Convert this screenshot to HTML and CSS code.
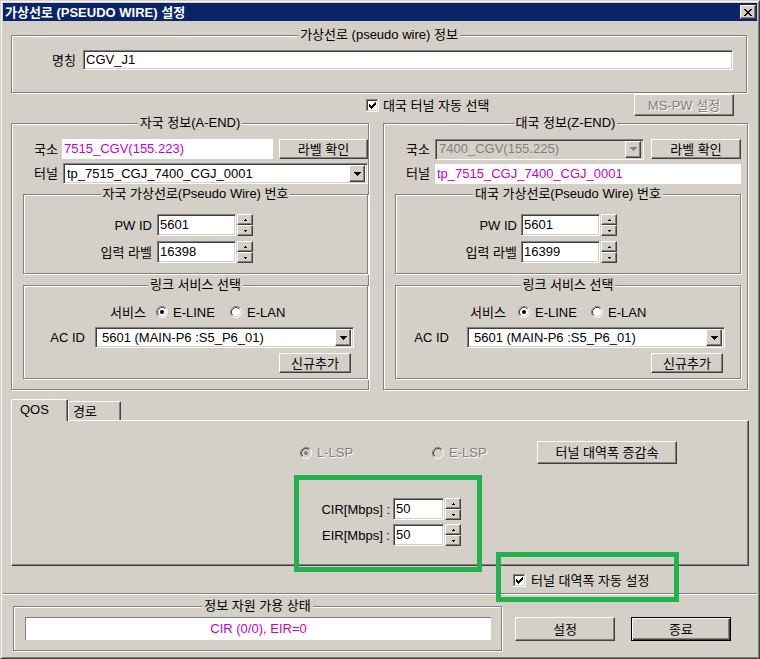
FILE: index.html
```html
<!DOCTYPE html>
<html lang="ko">
<head>
<meta charset="utf-8">
<title>가상선로 (PSEUDO WIRE) 설정</title>
<link rel="stylesheet" href="styles.css">
</head>
<body>
<div class="window">
  <div class="titlebar">
    <span class="title">가상선로 (PSEUDO WIRE) 설정</span>
    <span class="btn close-btn"><svg width="8" height="7" viewBox="0 0 8 7" shape-rendering="crispEdges"><path d="M0 0h2v1H0zM6 0h2v1H6zM1 1h2v1H1zM5 1h2v1H5zM2 2h4v1H2zM3 3h2v1H3zM2 4h4v1H2zM1 5h2v1H1zM5 5h2v1H5zM0 6h2v1H0zM6 6h2v1H6z"/></svg></span>
  </div>

  <div class="client">
    <div class="group g-info">
      <div class="gtitle"><span>가상선로 (pseudo wire) 정보</span></div>
      <div class="row r-name">
        <span class="lbl l-name">명칭</span>
        <div class="edit e-name">CGV_J1</div>
      </div>
    </div>

    <div class="row r-auto">
      <svg class="chk chk-auto" width="13" height="13" viewBox="0 0 13 13" shape-rendering="crispEdges"><rect width="13" height="13" fill="#fff"/><path d="M0 0h12v1H1v11H0z" fill="#808080"/><path d="M1 1h10v1H2v9H1z" fill="#404040"/><path d="M1 11h11v1H1zM11 1h1v11h-1z" fill="#D4D0C8"/><path d="M3 5h1v3H3zM4 6h1v3H4zM5 7h1v3H5zM6 6h1v3H6zM7 5h1v3H7zM8 4h1v3H8zM9 3h1v3H9z" fill="#000"/></svg>
      <span class="chk-text">대국 터널 자동 선택</span>
      <span class="btn btn-mspw dis">MS-PW 설정</span>
    </div>

    <div class="ends">
      <!-- A-END -->
      <div class="group g-end g-a">
        <div class="gtitle"><span>자국 정보(A-END)</span></div>
        <div class="row r-field">
          <span class="lbl la">국소</span>
          <div class="ro ro-a mag">7515_CGV(155.223)</div>
          <span class="btn btn-label-a">라벨 확인</span>
        </div>
        <div class="row r-field r-tunnel">
          <span class="lbl la">터널</span>
          <div class="combo cb-a-tunnel"><span class="combo-text">tp_7515_CGJ_7400_CGJ_0001</span><span class="btn combo-btn"><svg width="7" height="4" viewBox="0 0 7 4" shape-rendering="crispEdges"><path d="M0 0h7v1H0zM1 1h5v1H1zM2 2h3v1H2zM3 3h1v1H3z"/></svg></span></div>
        </div>
        <div class="group sub-pw">
          <div class="gtitle"><span>자국 가상선로(Pseudo Wire) 번호</span></div>
          <div class="row r-spin">
            <span class="lbl lpw-a">PW ID</span>
            <div class="edit e-spin e-spin-a">5601</div>
            <div class="spin">
              <span class="btn spin-btn"><svg width="3" height="2" viewBox="0 0 3 2" shape-rendering="crispEdges"><path d="M1 0h1v1H1zM0 1h3v1H0z"/></svg></span>
              <span class="btn spin-btn"><svg width="3" height="2" viewBox="0 0 3 2" shape-rendering="crispEdges"><path d="M0 0h3v1H0zM1 1h1v1H1z"/></svg></span>
            </div>
          </div>
          <div class="row r-spin r-spin2">
            <span class="lbl lpw-a">입력 라벨</span>
            <div class="edit e-spin e-spin-a">16398</div>
            <div class="spin">
              <span class="btn spin-btn"><svg width="3" height="2" viewBox="0 0 3 2" shape-rendering="crispEdges"><path d="M1 0h1v1H1zM0 1h3v1H0z"/></svg></span>
              <span class="btn spin-btn"><svg width="3" height="2" viewBox="0 0 3 2" shape-rendering="crispEdges"><path d="M0 0h3v1H0zM1 1h1v1H1z"/></svg></span>
            </div>
          </div>
        </div>
        <div class="group sub-link">
          <div class="gtitle"><span>링크 서비스 선택</span></div>
          <div class="row r-radio r-radio-a">
            <span class="svc-lbl">서비스</span>
            <span class="ritem ritem1"><svg class="radio" width="12" height="12" viewBox="0 0 12 12"><circle cx="6" cy="6" r="5" fill="#fff"/><path d="M2.11 9.89A5.5 5.5 0 0 1 9.89 2.11" fill="none" stroke="#808080"/><path d="M9.89 2.11A5.5 5.5 0 0 1 2.11 9.89" fill="none" stroke="#fff"/><path d="M2.82 9.18A4.5 4.5 0 0 1 9.18 2.82" fill="none" stroke="#404040"/><path d="M9.18 2.82A4.5 4.5 0 0 1 2.82 9.18" fill="none" stroke="#D4D0C8"/><circle cx="6" cy="6" r="2" fill="#000"/></svg>E-LINE</span>
            <span class="ritem"><svg class="radio" width="12" height="12" viewBox="0 0 12 12"><circle cx="6" cy="6" r="5" fill="#fff"/><path d="M2.11 9.89A5.5 5.5 0 0 1 9.89 2.11" fill="none" stroke="#808080"/><path d="M9.89 2.11A5.5 5.5 0 0 1 2.11 9.89" fill="none" stroke="#fff"/><path d="M2.82 9.18A4.5 4.5 0 0 1 9.18 2.82" fill="none" stroke="#404040"/><path d="M9.18 2.82A4.5 4.5 0 0 1 2.82 9.18" fill="none" stroke="#D4D0C8"/></svg>E-LAN</span>
          </div>
          <div class="row r-ac">
            <span class="lbl lac-a">AC ID</span>
            <div class="combo cb-ac cb-ac-a"><span class="combo-text">5601 (MAIN-P6 :S5_P6_01)</span><span class="btn combo-btn"><svg width="7" height="4" viewBox="0 0 7 4" shape-rendering="crispEdges"><path d="M0 0h7v1H0zM1 1h5v1H1zM2 2h3v1H2zM3 3h1v1H3z"/></svg></span></div>
          </div>
          <span class="btn btn-new">신규추가</span>
        </div>
      </div>

      <!-- Z-END -->
      <div class="group g-end g-z">
        <div class="gtitle"><span>대국 정보(Z-END)</span></div>
        <div class="row r-field">
          <span class="lbl lz">국소</span>
          <div class="combo combo-dis cb-z-kuk"><span class="combo-text">7400_CGV(155.225)</span><span class="btn combo-btn"><svg width="7" height="4" viewBox="0 0 7 4" shape-rendering="crispEdges"><path d="M0 0h7v1H0zM1 1h5v1H1zM2 2h3v1H2zM3 3h1v1H3z" fill="#808080"/></svg></span></div>
          <span class="btn btn-label-z">라벨 확인</span>
        </div>
        <div class="row r-field r-tunnel">
          <span class="lbl lz">터널</span>
          <div class="ro ro-z mag">tp_7515_CGJ_7400_CGJ_0001</div>
        </div>
        <div class="group sub-pw sub-z">
          <div class="gtitle"><span>대국 가상선로(Pseudo Wire) 번호</span></div>
          <div class="row r-spin">
            <span class="lbl lpw-z">PW ID</span>
            <div class="edit e-spin e-spin-z">5601</div>
            <div class="spin">
              <span class="btn spin-btn"><svg width="3" height="2" viewBox="0 0 3 2" shape-rendering="crispEdges"><path d="M1 0h1v1H1zM0 1h3v1H0z"/></svg></span>
              <span class="btn spin-btn"><svg width="3" height="2" viewBox="0 0 3 2" shape-rendering="crispEdges"><path d="M0 0h3v1H0zM1 1h1v1H1z"/></svg></span>
            </div>
          </div>
          <div class="row r-spin r-spin2">
            <span class="lbl lpw-z">입력 라벨</span>
            <div class="edit e-spin e-spin-z">16399</div>
            <div class="spin">
              <span class="btn spin-btn"><svg width="3" height="2" viewBox="0 0 3 2" shape-rendering="crispEdges"><path d="M1 0h1v1H1zM0 1h3v1H0z"/></svg></span>
              <span class="btn spin-btn"><svg width="3" height="2" viewBox="0 0 3 2" shape-rendering="crispEdges"><path d="M0 0h3v1H0zM1 1h1v1H1z"/></svg></span>
            </div>
          </div>
        </div>
        <div class="group sub-link sub-z">
          <div class="gtitle"><span>링크 서비스 선택</span></div>
          <div class="row r-radio r-radio-z">
            <span class="svc-lbl">서비스</span>
            <span class="ritem ritem1z"><svg class="radio" width="12" height="12" viewBox="0 0 12 12"><circle cx="6" cy="6" r="5" fill="#fff"/><path d="M2.11 9.89A5.5 5.5 0 0 1 9.89 2.11" fill="none" stroke="#808080"/><path d="M9.89 2.11A5.5 5.5 0 0 1 2.11 9.89" fill="none" stroke="#fff"/><path d="M2.82 9.18A4.5 4.5 0 0 1 9.18 2.82" fill="none" stroke="#404040"/><path d="M9.18 2.82A4.5 4.5 0 0 1 2.82 9.18" fill="none" stroke="#D4D0C8"/><circle cx="6" cy="6" r="2" fill="#000"/></svg>E-LINE</span>
            <span class="ritem"><svg class="radio" width="12" height="12" viewBox="0 0 12 12"><circle cx="6" cy="6" r="5" fill="#fff"/><path d="M2.11 9.89A5.5 5.5 0 0 1 9.89 2.11" fill="none" stroke="#808080"/><path d="M9.89 2.11A5.5 5.5 0 0 1 2.11 9.89" fill="none" stroke="#fff"/><path d="M2.82 9.18A4.5 4.5 0 0 1 9.18 2.82" fill="none" stroke="#404040"/><path d="M9.18 2.82A4.5 4.5 0 0 1 2.82 9.18" fill="none" stroke="#D4D0C8"/></svg>E-LAN</span>
          </div>
          <div class="row r-ac">
            <span class="lbl lac-z">AC ID</span>
            <div class="combo cb-ac cb-ac-z"><span class="combo-text">5601 (MAIN-P6 :S5_P6_01)</span><span class="btn combo-btn"><svg width="7" height="4" viewBox="0 0 7 4" shape-rendering="crispEdges"><path d="M0 0h7v1H0zM1 1h5v1H1zM2 2h3v1H2zM3 3h1v1H3z"/></svg></span></div>
          </div>
          <span class="btn btn-new">신규추가</span>
        </div>
      </div>
    </div>

    <div class="tabs">
      <div class="tabstrip">
        <span class="tab tab-sel">QOS</span>
        <span class="tab tab-route">경로</span>
      </div>
      <div class="tabpanel">
        <div class="row r-lsp">
          <span class="ritem dis ritem-l"><svg class="radio" width="12" height="12" viewBox="0 0 12 12"><circle cx="6" cy="6" r="5" fill="#D4D0C8"/><path d="M2.11 9.89A5.5 5.5 0 0 1 9.89 2.11" fill="none" stroke="#808080"/><path d="M9.89 2.11A5.5 5.5 0 0 1 2.11 9.89" fill="none" stroke="#fff"/><path d="M2.82 9.18A4.5 4.5 0 0 1 9.18 2.82" fill="none" stroke="#404040"/><path d="M9.18 2.82A4.5 4.5 0 0 1 2.82 9.18" fill="none" stroke="#D4D0C8"/><circle cx="6" cy="6" r="2" fill="#808080"/></svg>L-LSP</span>
          <span class="ritem dis ritem-e"><svg class="radio" width="12" height="12" viewBox="0 0 12 12"><circle cx="6" cy="6" r="5" fill="#D4D0C8"/><path d="M2.11 9.89A5.5 5.5 0 0 1 9.89 2.11" fill="none" stroke="#808080"/><path d="M9.89 2.11A5.5 5.5 0 0 1 2.11 9.89" fill="none" stroke="#fff"/><path d="M2.82 9.18A4.5 4.5 0 0 1 9.18 2.82" fill="none" stroke="#404040"/><path d="M9.18 2.82A4.5 4.5 0 0 1 2.82 9.18" fill="none" stroke="#D4D0C8"/></svg>E-LSP</span>
          <span class="btn btn-bw">터널 대역폭 증감속</span>
        </div>
        <div class="row r-rate">
          <span class="lbl l-rate">CIR[Mbps] :</span>
          <div class="edit e-spin e-rate">50</div>
          <div class="spin">
            <span class="btn spin-btn"><svg width="3" height="2" viewBox="0 0 3 2" shape-rendering="crispEdges"><path d="M1 0h1v1H1zM0 1h3v1H0z"/></svg></span>
            <span class="btn spin-btn"><svg width="3" height="2" viewBox="0 0 3 2" shape-rendering="crispEdges"><path d="M0 0h3v1H0zM1 1h1v1H1z"/></svg></span>
          </div>
        </div>
        <div class="row r-rate r-rate2">
          <span class="lbl l-rate">EIR[Mbps] :</span>
          <div class="edit e-spin e-rate">50</div>
          <div class="spin">
            <span class="btn spin-btn"><svg width="3" height="2" viewBox="0 0 3 2" shape-rendering="crispEdges"><path d="M1 0h1v1H1zM0 1h3v1H0z"/></svg></span>
            <span class="btn spin-btn"><svg width="3" height="2" viewBox="0 0 3 2" shape-rendering="crispEdges"><path d="M0 0h3v1H0zM1 1h1v1H1z"/></svg></span>
          </div>
        </div>
      </div>
    </div>

    <div class="row r-autobw">
      <svg class="chk" width="13" height="13" viewBox="0 0 13 13" shape-rendering="crispEdges"><rect width="13" height="13" fill="#fff"/><path d="M0 0h12v1H1v11H0z" fill="#808080"/><path d="M1 1h10v1H2v9H1z" fill="#404040"/><path d="M1 11h11v1H1zM11 1h1v11h-1z" fill="#D4D0C8"/><path d="M3 5h1v3H3zM4 6h1v3H4zM5 7h1v3H5zM6 6h1v3H6zM7 5h1v3H7zM8 4h1v3H8zM9 3h1v3H9z" fill="#000"/></svg>
      <span class="chk-text2">터널 대역폭 자동 설정</span>
    </div>

    <div class="sep"></div>

    <div class="row bottom">
      <div class="group g-status">
        <div class="gtitle"><span>정보 자원 가용 상태</span></div>
        <div class="status-field mag">CIR (0/0), EIR=0</div>
      </div>
      <span class="btn btn-set">설정</span>
      <span class="btn btn-default btn-exit">종료</span>
    </div>
  </div>

  <div class="mark mark-rate"></div>
  <div class="mark mark-auto"></div>
</div>
</body>
</html>
```

FILE: styles.css
```css
* { box-sizing: border-box; }
html, body { margin: 0; padding: 0; }
body {
  background: #D4D0C8;
  font-family: "Liberation Sans", "Noto Sans CJK KR", sans-serif;
  font-size: 13px;
  line-height: 15px;
  color: #000;
}

/* window frame */
.window {
  position: relative;
  width: 760px;
  height: 659px;
  background: #D4D0C8;
  border: 1px solid;
  border-color: #D4D0C8 #404040 #404040 #D4D0C8;
  box-shadow: inset 1px 1px 0 #fff, inset -1px -1px 0 #808080;
  padding: 2px;
  overflow: hidden;
}
.titlebar {
  height: 18px;
  background: #0A246A;
  display: flex;
  align-items: center;
  justify-content: space-between;
  padding: 0 1px 0 2px;
}
.title { color: #fff; font-weight: bold; white-space: nowrap; }
.close-btn { width: 16px; height: 14px; }

.client { padding: 0 8px; }

/* common controls */
.row { display: flex; align-items: center; }
.lbl { flex: none; text-align: right; white-space: nowrap; }

.btn {
  display: flex;
  align-items: center;
  justify-content: center;
  flex: none;
  background: #D4D0C8;
  border: 1px solid;
  border-color: #fff #404040 #404040 #fff;
  box-shadow: inset -1px -1px 0 #808080;
  white-space: nowrap;
}
.btn-default {
  border-color: #000;
  box-shadow: inset 1px 1px 0 #fff, inset -1px -1px 0 #404040, inset -2px -2px 0 #808080;
}
.dis { color: #808080; text-shadow: 1px 1px 0 #fff; }
.mag { color: #C800C8; }

.edit {
  flex: none;
  background: #fff;
  border: 1px solid;
  border-color: #808080 #fff #fff #808080;
  box-shadow: inset 1px 1px 0 #404040, inset -1px -1px 0 #D4D0C8;
  white-space: nowrap;
  overflow: hidden;
}
.ro {
  flex: none;
  background: #fff;
  height: 20px;
  line-height: 20px;
  padding-left: 2px;
  white-space: nowrap;
}

.combo {
  flex: none;
  display: flex;
  align-items: center;
  justify-content: space-between;
  height: 21px;
  background: #fff;
  border: 1px solid;
  border-color: #808080 #fff #fff #808080;
  box-shadow: inset 1px 1px 0 #404040, inset -1px -1px 0 #D4D0C8;
  padding: 2px 2px 2px 3px;
  white-space: nowrap;
}
.combo-text { line-height: 16px; }
.combo-btn { width: 16px; height: 17px; }
.combo-dis { background: #D4D0C8; color: #808080; }

.spin {
  flex: none;
  display: flex;
  flex-direction: column;
  justify-content: space-between;
  width: 16px;
  height: 22px;
  margin-left: 1px;
}
.spin-btn { width: 16px; height: 11px; }

.chk { flex: none; display: block; }
.radio { flex: none; display: block; }
.ritem { display: flex; align-items: center; gap: 5px; flex: none; white-space: nowrap; }

/* group boxes */
.group {
  position: relative;
  flex: none;
  border: 1px solid #808080;
  box-shadow: inset 1px 1px 0 #fff, 1px 1px 0 #fff;
}
.gtitle {
  position: absolute;
  top: -9px;
  left: 0;
  right: 0;
  text-align: center;
  line-height: 15px;
  white-space: nowrap;
}
.gtitle span { background: #D4D0C8; padding: 0 2px; }

/* name group */
.g-info { margin-top: 14px; width: 736px; height: 58px; padding-top: 14px; }
.l-name { width: 64px; margin-right: 7px; }
.e-name { width: 650px; height: 20px; line-height: 18px; padding-left: 2px; }

/* auto tunnel row */
.r-auto { height: 24px; }
.chk-auto { margin-left: 355px; margin-top: 1px; }
.chk-text { margin-left: 4px; }
.btn-mspw { margin-left: auto; margin-right: 15px; width: 100px; height: 22px; }

/* end groups */
.ends { display: flex; margin-top: 6px; }
.g-end { height: 267px; padding-top: 15px; }
.g-a { width: 358px; }
.g-z { width: 365px; margin-left: 14px; }
.r-field { height: 20px; }
.r-tunnel { margin-top: 4px; height: 21px; }

.la { width: 46px; margin-right: 4px; }
.r-tunnel .la { margin-right: 5px; }
.ro-a { width: 211px; }
.btn-label-a { width: 89px; height: 20px; margin-left: 6px; }
.cb-a-tunnel { width: 305px; }

.lz { width: 46px; margin-right: 5px; }
.cb-z-kuk { width: 209px; }
.btn-label-z { width: 90px; height: 20px; margin-left: 7px; }
.ro-z { width: 306px; }

.sub-pw { margin: 10px 0 0 11px; width: 345px; height: 80px; padding-top: 19px; }
.sub-z { width: 346px; }
.r-spin { height: 22px; }
.r-spin2 { margin-top: 5px; }
.e-spin { height: 22px; padding: 2px 0 0 2px; line-height: 15px; }
.lpw-a { width: 128px; margin-right: 5px; }
.e-spin-a { width: 79px; }
.lpw-z { width: 121px; margin-right: 4px; }
.e-spin-z { width: 79px; }

.sub-link { margin: 11px 0 0 11px; width: 345px; height: 94px; padding-top: 19px; }
.sub-link.sub-z { width: 346px; }
.r-radio { height: 14px; }
.r-radio-a { margin-left: 86px; }
.r-radio-z { margin-left: 74px; }
.svc-lbl { width: 46px; flex: none; }
.r-radio-z .svc-lbl { width: 48px; }
.ritem1 { width: 74px; }
.ritem1z { width: 73px; }
.r-ac { margin-top: 8px; height: 21px; }
.lac-a { width: 61px; margin-right: 10px; }
.lac-z { width: 53px; margin-right: 18px; }
.cb-ac { padding-left: 6px; }
.cb-ac-a { width: 259px; }
.cb-ac-z { width: 258px; }
.btn-new { margin: 5px 0 0 255px; width: 72px; height: 20px; }

/* tabs */
.tabs { margin-top: 9px; }
.tabstrip { display: flex; align-items: flex-end; height: 21px; }
.tab {
  display: flex;
  align-items: center;
  border-top: 1px solid #fff;
  border-left: 1px solid #fff;
  border-right: 1px solid #404040;
  box-shadow: inset -1px 0 0 #808080;
  border-radius: 2px 2px 0 0;
  background: #D4D0C8;
  white-space: nowrap;
}
.tab-sel {
  position: relative;
  z-index: 1;
  width: 57px;
  height: 22px;
  margin-bottom: -1px;
  padding: 0 0 2px 8px;
}
.tab-route { width: 53px; height: 19px; padding-left: 4px; }
.tabpanel {
  width: 738px;
  height: 146px;
  border-top: 1px solid #fff;
  border-left: 1px solid #fff;
  border-right: 1px solid #404040;
  border-bottom: 1px solid #404040;
  box-shadow: inset -1px -1px 0 #808080;
  padding-top: 20px;
}
.r-lsp { height: 23px; margin-left: 288px; }
.ritem-l { width: 132px; }
.ritem-e { width: 105px; }
.btn-bw { width: 140px; height: 23px; }
.r-rate { margin-top: 34px; height: 22px; }
.r-rate2 { margin-top: 4px; }
.l-rate { width: 378px; margin-right: 3px; }
.e-rate { width: 51px; }

.r-autobw { margin: 7px 0 0 502px; height: 14px; }
.chk-text2 { margin-left: 5px; white-space: nowrap; }

.sep {
  margin: 6px -8px 0;
  height: 2px;
  border-top: 1px solid #808080;
  border-bottom: 1px solid #fff;
}

.bottom { margin-top: 11px; align-items: flex-start; }
.g-status { margin-left: 2px; width: 489px; height: 45px; padding: 10px 0 0 11px; }
.status-field {
  width: 466px;
  height: 23px;
  background: #fff;
  border-left: 1px solid #808080;
  border-top: 1px solid #808080;
  text-align: center;
  line-height: 21px;
}
.btn-set { margin: 11px 0 0 13px; width: 100px; height: 24px; }
.btn-exit { margin: 11px 0 0 16px; width: 100px; height: 24px; }

/* green annotation boxes drawn over the dialog */
.mark {
  position: absolute;
  border: 5px solid #22B14C;
  pointer-events: none;
}
.mark-rate { left: 293px; top: 474px; width: 188px; height: 97px; }
.mark-auto { left: 495px; top: 551px; width: 183px; height: 50px; }
```
